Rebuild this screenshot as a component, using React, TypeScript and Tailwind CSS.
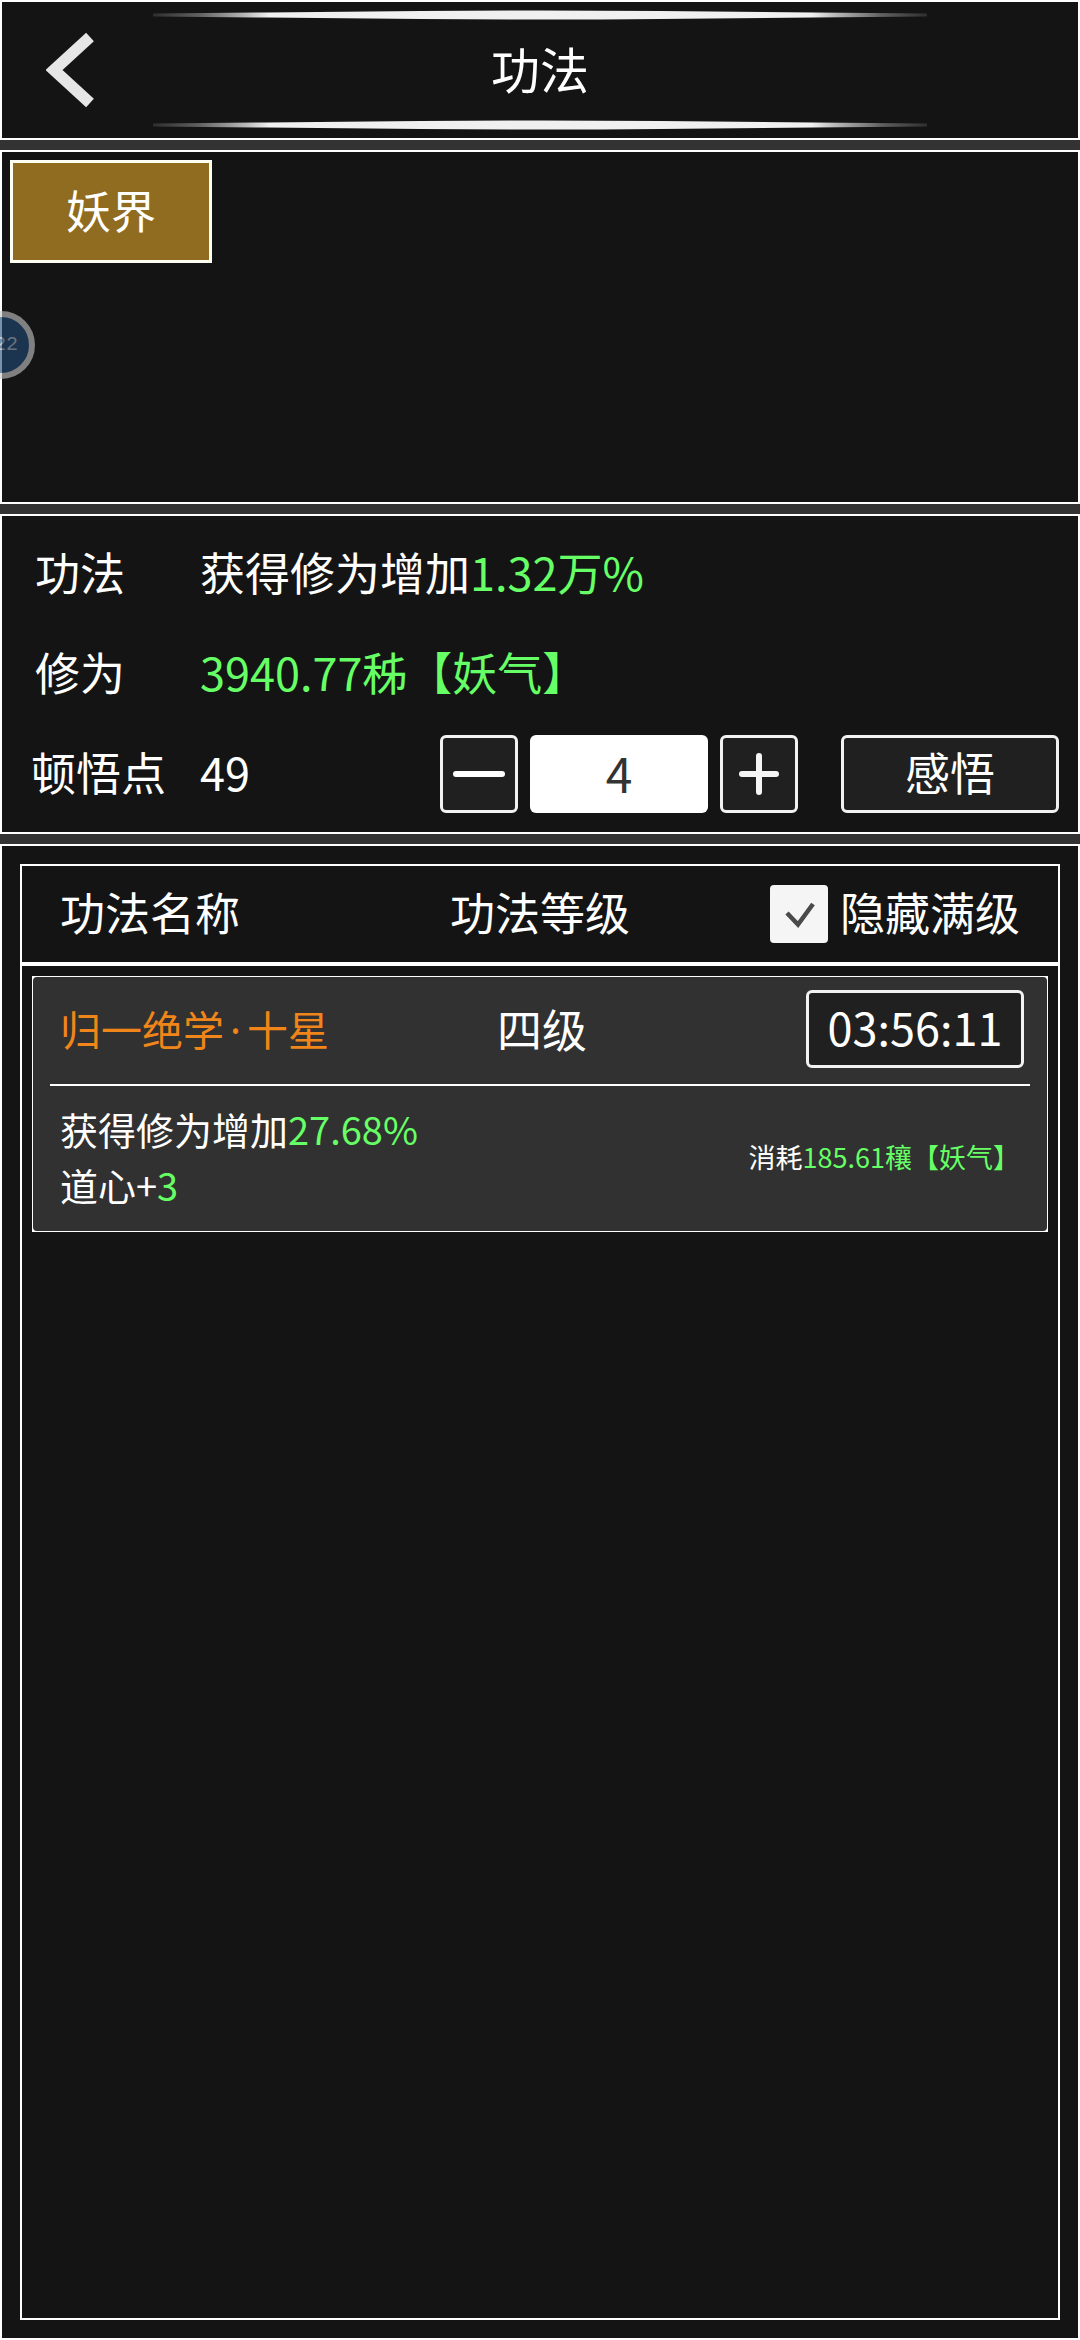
import React, { useState } from 'react';

interface Technique {
  name: string;
  stars: string;
  level: string;
  countdown: string;
  bonus: string;
  heart: string;
  cost: string;
}

const techniques: Technique[] = [
  {
    name: '归一绝学',
    stars: '十星',
    level: '四级',
    countdown: '03:56:11',
    bonus: '27.68%',
    heart: '3',
    cost: '185.61穰【妖气】',
  },
];

const panelClass = 'border-2 border-white bg-[#141414]';
const buttonClass =
  'flex h-[78px] shrink-0 items-center justify-center rounded-md border-3 border-[#f2f2f2] bg-[#202020]';

const HeaderGlow: React.FC = () => (
  <svg viewBox="0 0 780 10" preserveAspectRatio="none" className="h-[10px] w-[72%]" aria-hidden="true">
    <defs>
      <linearGradient id="glow" x1="0" x2="1" y1="0" y2="0">
        <stop offset="0" stopColor="#f0f0f0" stopOpacity="0.12" />
        <stop offset="0.06" stopColor="#f0f0f0" stopOpacity="0.35" />
        <stop offset="0.12" stopColor="#f0f0f0" stopOpacity="0.75" />
        <stop offset="0.15" stopColor="#f0f0f0" />
        <stop offset="0.85" stopColor="#f0f0f0" />
        <stop offset="0.88" stopColor="#f0f0f0" stopOpacity="0.75" />
        <stop offset="0.94" stopColor="#f0f0f0" stopOpacity="0.35" />
        <stop offset="1" stopColor="#f0f0f0" stopOpacity="0.12" />
      </linearGradient>
    </defs>
    <path d="M0 3.5 L115 2.5 L270 1 Q390 0 510 1 L665 2.5 L780 3.5 V6.5 L665 7.5 L510 9 Q390 10 270 9 L115 7.5 L0 6.5 Z" fill="url(#glow)" />
  </svg>
);

const Header: React.FC = () => (
  <header className={`flex h-[140px] flex-col items-center justify-between py-2 ${panelClass}`}>
    <HeaderGlow />
    <div className="grid w-full grid-cols-3 items-center">
      <button type="button" aria-label="返回" className="ml-[44px] justify-self-start">
        <svg width="48" height="76" viewBox="0 0 48 76" fill="none" stroke="#e6e6e6" strokeWidth="11.5">
          <path d="M44 5 L8 38 L44 71" />
        </svg>
      </button>
      <h1 className="pb-1 text-center text-[49px] leading-[60px]">功法</h1>
    </div>
    <HeaderGlow />
  </header>
);

const TechniqueCard: React.FC<{ technique: Technique }> = ({ technique }) => (
  <li className="border border-white bg-white">
    <div className="rounded-sm bg-[#313131] px-[17px]">
      <div className="grid h-[109px] grid-cols-[1fr_auto_1fr] items-center border-b-2 border-white pr-[6px] pb-1 pl-[10px]">
        <span className="text-[41px] text-[#f08519]">
          {technique.name}
          <span className="mx-[6px] font-['Noto_Sans',sans-serif]">·</span>
          {technique.stars}
        </span>
        <span>{technique.level}</span>
        <button type="button" className={`w-[218px] justify-self-end pb-1 ${buttonClass}`}>
          {technique.countdown}
        </button>
      </div>
      <div className="flex h-[145px] items-center justify-between px-[10px] pb-1">
        <div className="text-[38px] leading-[56px]">
          <p>
            获得修为增加<span className="text-[#66ff66]">{technique.bonus}</span>
          </p>
          <p>
            道心+<span className="text-[#66ff66]">{technique.heart}</span>
          </p>
        </div>
        <p className="text-[27px]">
          消耗<span className="text-[#66ff66]">{technique.cost}</span>
        </p>
      </div>
    </div>
  </li>
);

const App: React.FC = () => {
  const [amount, setAmount] = useState(4);
  const [hideMaxed, setHideMaxed] = useState(true);

  return (
    <main
      lang="zh-CN"
      className="flex min-h-screen flex-col gap-[10px] bg-[#333333] font-['Noto_Sans_CJK_SC',sans-serif] text-[45px] leading-[60px] text-white"
    >
      <Header />

      <nav className={`relative h-[354px] p-2 ${panelClass}`}>
        <button type="button" className="h-[103px] w-[202px] border-3 border-[#fffff4] bg-[#8f6c20] pb-1">
          妖界
        </button>
        <div className="absolute top-[159px] left-[-35px] flex h-[68px] w-[68px] items-center justify-end rounded-full border-6 border-[#c8c8c8] bg-[#204b7a] pr-[11px] font-['Liberation_Mono',monospace] text-[20px] leading-none text-[#a0b0c4] opacity-60">
          22
        </div>
      </nav>

      <section className={`flex flex-col gap-5 pt-[17px] pr-[19px] pb-[19px] pl-[29px] ${panelClass}`}>
        <dl className="flex flex-col gap-[18px]">
          <div className="flex h-[82px] items-center pb-1">
            <dt className="w-[169px] pl-1">功法</dt>
            <dd>
              获得修为增加<span className="text-[#66ff66]">1.32万%</span>
            </dd>
          </div>
          <div className="flex h-[82px] items-center pb-1">
            <dt className="w-[169px] pl-1">修为</dt>
            <dd className="text-[#66ff66]">3940.77秭【妖气】</dd>
          </div>
        </dl>
        <div className="flex items-center">
          <span className="w-[169px] pb-1">顿悟点</span>
          <span className="pb-1">49</span>
          <div className="ml-auto flex gap-3">
            <button
              type="button"
              aria-label="减少"
              className={`w-[78px] ${buttonClass}`}
              onClick={() => setAmount((prev) => Math.max(0, prev - 1))}
            >
              <svg width="54" height="54" stroke="#fff" strokeWidth="6" strokeLinecap="round">
                <path d="M4 27 H50" />
              </svg>
            </button>
            <input
              type="text"
              aria-label="顿悟点数量"
              value={amount}
              onChange={(event) => setAmount(Number(event.target.value) || 0)}
              className="h-[78px] w-[178px] rounded-md bg-white pb-1 text-center text-[48px] text-[#333333]"
            />
            <button
              type="button"
              aria-label="增加"
              className={`w-[78px] ${buttonClass}`}
              onClick={() => setAmount((prev) => prev + 1)}
            >
              <svg width="54" height="54" stroke="#f5f5f5" strokeWidth="6" strokeLinecap="round">
                <path d="M10 27 H44 M27 9 V45" />
              </svg>
            </button>
          </div>
          <button type="button" className={`ml-[43px] w-[218px] pb-1 ${buttonClass}`}>
            感悟
          </button>
        </div>
      </section>

      <section className={`flex grow flex-col p-[18px] ${panelClass}`}>
        <div className="grow border-2 border-white">
          <div className="grid h-[100px] grid-cols-[1fr_auto_1fr] items-center border-b-4 border-white px-[38px]">
            <h2 className="pb-1">功法名称</h2>
            <h2 className="pb-1">功法等级</h2>
            <label className="flex items-center gap-3 justify-self-end">
              <span className="relative h-[58px] w-[58px]">
                <input
                  type="checkbox"
                  checked={hideMaxed}
                  onChange={(event) => setHideMaxed(event.target.checked)}
                  className="block h-full w-full appearance-none rounded-sm bg-[#f5f5f5]"
                />
                {hideMaxed && (
                  <svg
                    viewBox="0 0 58 58"
                    fill="none"
                    stroke="#4a4a4a"
                    strokeWidth="4.5"
                    className="pointer-events-none absolute inset-0"
                  >
                    <path d="M17 28 L28 39.5 L43 19" />
                  </svg>
                )}
              </span>
              <span className="pb-1">隐藏满级</span>
            </label>
          </div>
          <ul className="flex flex-col gap-[10px] p-[10px]">
            {techniques.map((technique) => (
              <TechniqueCard key={technique.name} technique={technique} />
            ))}
          </ul>
        </div>
      </section>
    </main>
  );
};

export default App;
